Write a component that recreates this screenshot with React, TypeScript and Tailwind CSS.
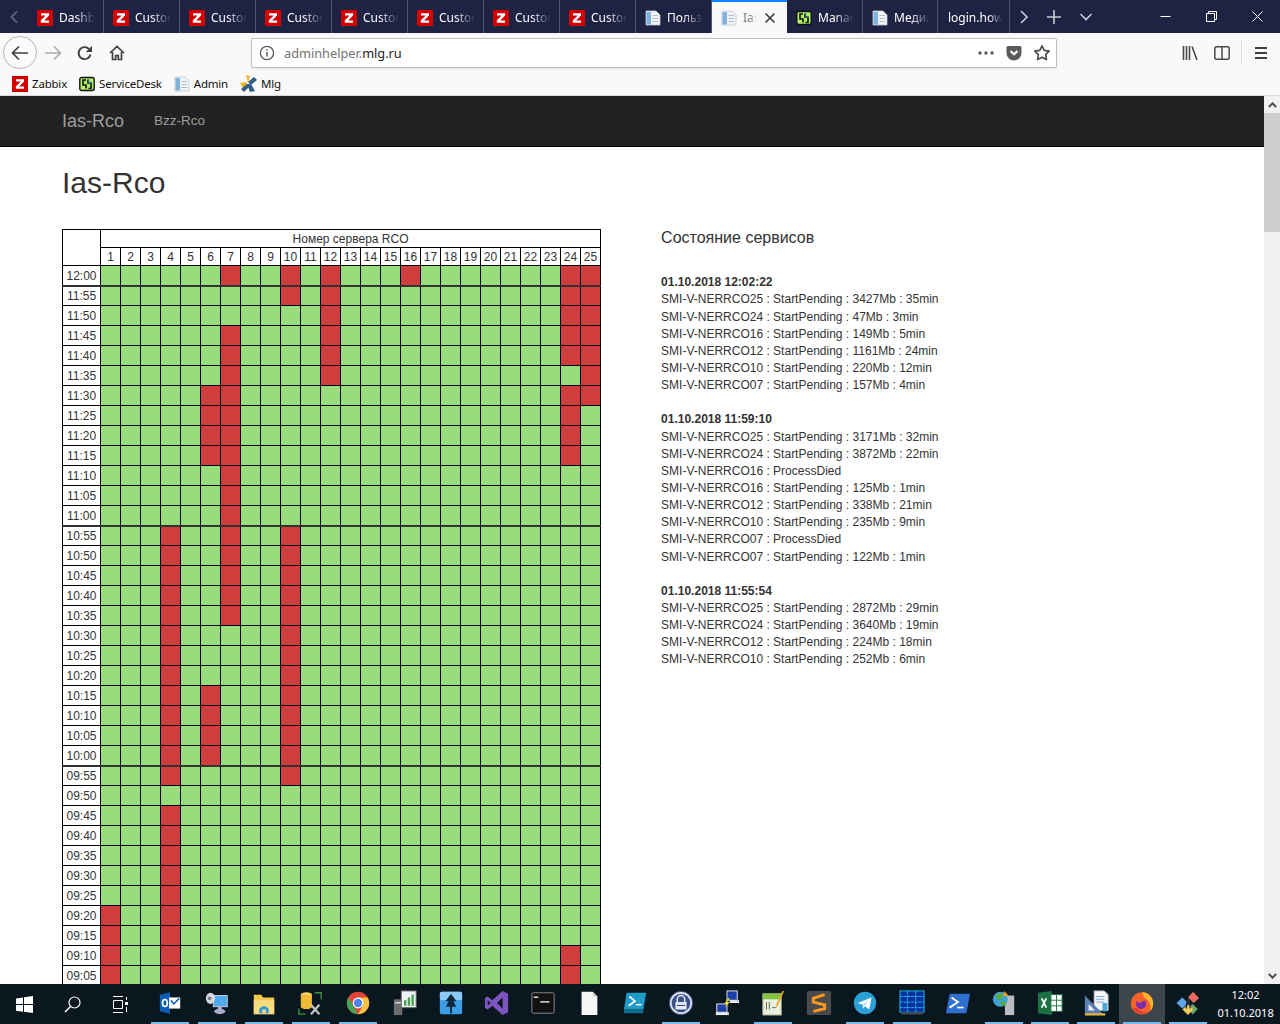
import React from "react";

const UI = "font-['Noto_Sans',sans-serif]";

const reds: Record<string, number[]> = {
  "12:00": [7, 10, 12, 16, 24, 25],
  "11:55": [10, 12, 24, 25],
  "11:50": [12, 24, 25],
  "11:45": [7, 12, 24, 25],
  "11:40": [7, 12, 24, 25],
  "11:35": [7, 12, 25],
  "11:30": [6, 7, 24, 25],
  "11:25": [6, 7, 24],
  "11:20": [6, 7, 24],
  "11:15": [6, 7, 24],
  "11:10": [7],
  "11:05": [7],
  "11:00": [7],
  "10:55": [4, 7, 10],
  "10:50": [4, 7, 10],
  "10:45": [4, 7, 10],
  "10:40": [4, 7, 10],
  "10:35": [4, 7, 10],
  "10:30": [4, 10],
  "10:25": [4, 10],
  "10:20": [4, 10],
  "10:15": [4, 6, 10],
  "10:10": [4, 6, 10],
  "10:05": [4, 6, 10],
  "10:00": [4, 6, 10],
  "09:55": [4, 10],
  "09:50": [],
  "09:45": [4],
  "09:40": [4],
  "09:35": [4],
  "09:30": [4],
  "09:25": [4],
  "09:20": [1, 4],
  "09:15": [1, 4],
  "09:10": [1, 4, 24],
  "09:05": [1, 4, 24],
};

const columns = Array.from({ length: 25 }, (_, i) => i + 1);

const logs = [
  {
    time: "01.10.2018 12:02:22",
    lines: [
      "SMI-V-NERRCO25 : StartPending : 3427Mb : 35min",
      "SMI-V-NERRCO24 : StartPending : 47Mb : 3min",
      "SMI-V-NERRCO16 : StartPending : 149Mb : 5min",
      "SMI-V-NERRCO12 : StartPending : 1161Mb : 24min",
      "SMI-V-NERRCO10 : StartPending : 220Mb : 12min",
      "SMI-V-NERRCO07 : StartPending : 157Mb : 4min",
    ],
  },
  {
    time: "01.10.2018 11:59:10",
    lines: [
      "SMI-V-NERRCO25 : StartPending : 3171Mb : 32min",
      "SMI-V-NERRCO24 : StartPending : 3872Mb : 22min",
      "SMI-V-NERRCO16 : ProcessDied",
      "SMI-V-NERRCO16 : StartPending : 125Mb : 1min",
      "SMI-V-NERRCO12 : StartPending : 338Mb : 21min",
      "SMI-V-NERRCO10 : StartPending : 235Mb : 9min",
      "SMI-V-NERRCO07 : ProcessDied",
      "SMI-V-NERRCO07 : StartPending : 122Mb : 1min",
    ],
  },
  {
    time: "01.10.2018 11:55:54",
    lines: [
      "SMI-V-NERRCO25 : StartPending : 2872Mb : 29min",
      "SMI-V-NERRCO24 : StartPending : 3640Mb : 19min",
      "SMI-V-NERRCO12 : StartPending : 224Mb : 18min",
      "SMI-V-NERRCO10 : StartPending : 252Mb : 6min",
    ],
  },
];

function ZIcon() {
  return (
    <svg width="16" height="16" viewBox="0 0 16 16" className="shrink-0">
      <rect width="16" height="16" fill="#d40000" />
      <path d="M4 3.2h8v2.2L7.2 10.6H12v2.2H3.800v-2.2L8.600 5.400H4z" fill="#fff" />
    </svg>
  );
}

function DocIcon() {
  return (
    <svg width="16" height="16" viewBox="0 0 16 16" className="shrink-0">
      <path d="M1 1h10l4 4v10H1z" fill="#f1f3f6" stroke="#c3c9d0" strokeWidth="0.8" />
      <rect x="1.5" y="2" width="4.5" height="12.5" fill="#7fb2de" />
      <rect x="7.5" y="5" width="5.5" height="1" fill="#b8bec6" />
      <rect x="7.5" y="8" width="5.5" height="1" fill="#b8bec6" />
      <rect x="7.5" y="11" width="5.5" height="1" fill="#b8bec6" />
    </svg>
  );
}

function SdIcon() {
  return (
    <svg width="16" height="16" viewBox="0 0 16 16" className="shrink-0">
      <rect x="0.8" y="1.5" width="14.4" height="13" rx="2" fill="#b2f067" stroke="#111" strokeWidth="1.4" />
      <path d="M7 4H4v5h3v3.5M9.500 12.500H12V7H9V3.500" fill="none" stroke="#111" strokeWidth="1.600" />
      <path d="M10 3v4h3" fill="none" stroke="#3a8fd6" strokeWidth="0.8" />
    </svg>
  );
}

function MlgIcon() {
  return (
    <svg width="17" height="17" viewBox="0 0 17 17" className="shrink-0">
      <path d="M8 8 6 0l4 1z" fill="#f0b429" />
      <path d="M0 8l6-1 2 3-5 3z" fill="#f0b429" />
      <path d="M8 7l6-5 3 3-6 5z" fill="#2f5f84" />
      <path d="M7 9l4 0 4 7-5 1z" fill="#2f5f84" />
      <path d="M1 14l6-5 2 3-5 5z" fill="#2f5f84" />
    </svg>
  );
}

function Tab({
  icon,
  label,
  active,
  width = "w-[76px]",
}: {
  icon?: React.ReactNode;
  label: string;
  active?: boolean;
  width?: string;
}) {
  if (active) {
    return (
      <div className="flex h-[33px] w-[75px] shrink-0 items-center border-t-2 border-[#0a84ff] bg-[#f9f9fa] pl-[9px]">
        {icon}
        <span className="ml-[6px] w-[14px] overflow-hidden whitespace-nowrap text-xs text-[#7a7a7a] [mask-image:linear-gradient(to_right,black_50%,transparent)]">
          {label}
        </span>
        <svg width="12" height="12" viewBox="0 0 12 12" className="ml-[7px]">
          <path d="M1.5 1.5l9 9M10.5 1.5l-9 9" stroke="#333" strokeWidth="1.5" />
        </svg>
      </div>
    );
  }
  return (
    <div className={`flex h-[33px] shrink-0 items-center border-r border-[#50536f] pl-[9px] pt-[2px] ${width}`}>
      {icon}
      <span className="ml-[6px] w-[36px] overflow-hidden whitespace-nowrap text-xs text-white [mask-image:linear-gradient(to_right,black_45%,transparent_100%)]">
        {label}
      </span>
    </div>
  );
}

function TabBar() {
  return (
    <div className={`flex h-[33px] shrink-0 items-center bg-[#1e2243] ${UI}`}>
      <div className="flex w-[28px] justify-center">
        <svg width="10" height="14" viewBox="0 0 10 14">
          <path d="M8 1.500 2.500 7 8 12.500" fill="none" stroke="#5c6079" strokeWidth="2" />
        </svg>
      </div>
      <Tab icon={<ZIcon />} label="Dashboard" />
      {Array.from({ length: 7 }, (_, i) => (
        <Tab key={i} icon={<ZIcon />} label="Custom" />
      ))}
      <Tab icon={<DocIcon />} label="Пользователи" />
      <Tab icon={<DocIcon />} label="Ias-Rco" active />
      <Tab icon={<SdIcon />} label="Manage" />
      <Tab icon={<DocIcon />} label="Медиа" width="w-[75px]" />
      <div className="flex h-[33px] w-[72px] shrink-0 items-center border-r border-[#50536f] pl-[10px] pt-[2px]">
        <span className="w-[54px] overflow-hidden whitespace-nowrap text-xs text-white [mask-image:linear-gradient(to_right,black_75%,transparent)]">
          login.howto
        </span>
      </div>
      <div className="flex w-[28px] justify-center">
        <svg width="10" height="16" viewBox="0 0 10 16">
          <path d="M2 2l6 6-6 6" fill="none" stroke="#c9cbd6" strokeWidth="1.600" />
        </svg>
      </div>
      <div className="flex w-[32px] justify-center">
        <svg width="16" height="16" viewBox="0 0 16 16">
          <path d="M8 1v14M1 8h14" stroke="#c9cbd6" strokeWidth="1.600" />
        </svg>
      </div>
      <div className="flex w-[32px] justify-center">
        <svg width="14" height="10" viewBox="0 0 14 10">
          <path d="M1.500 2 7 7.500 12.500 2" fill="none" stroke="#c9cbd6" strokeWidth="1.600" />
        </svg>
      </div>
      <div className="flex-1" />
      <div className="flex w-[46px] justify-center">
        <svg width="11" height="11" viewBox="0 0 11 11">
          <path d="M0.500 5.500h10" stroke="#fff" />
        </svg>
      </div>
      <div className="flex w-[46px] justify-center">
        <svg width="11" height="11" viewBox="0 0 11 11">
          <path d="M0.500 2.500h8v8h-8zM2.500 2.500v-2h8v8h-2" fill="none" stroke="#fff" />
        </svg>
      </div>
      <div className="flex w-[46px] justify-center">
        <svg width="11" height="11" viewBox="0 0 11 11">
          <path d="M0.500 0.500l10 10M10.500 0.500l-10 10" stroke="#fff" />
        </svg>
      </div>
    </div>
  );
}

function Toolbar() {
  return (
    <div className={`flex h-[37px] shrink-0 items-center bg-[#f9f9fa] pt-[2px] ${UI}`}>
      <div className="ml-[3px] flex h-[33px] w-[34px] items-center justify-center rounded-full border border-[#b5b5b7] bg-[#fbfbfc]">
        <svg width="18" height="16" viewBox="0 0 18 16">
          <path d="M8 1.500 1.500 8 8 14.500M1.500 8H17" fill="none" stroke="#3f3f41" strokeWidth="1.700" />
        </svg>
      </div>
      <div className="flex w-[32px] justify-center">
        <svg width="18" height="16" viewBox="0 0 18 16">
          <path d="M10 1.500 16.500 8 10 14.500M16.500 8H1" fill="none" stroke="#adadaf" strokeWidth="1.700" />
        </svg>
      </div>
      <div className="flex w-[32px] justify-center">
        <svg width="16" height="16" viewBox="0 0 16 16">
          <path d="M13.500 9.500A6 6 0 1 1 12 4" fill="none" stroke="#3f3f41" strokeWidth="1.900" />
          <path d="M15 0.800V7H8.800z" fill="#3f3f41" />
        </svg>
      </div>
      <div className="flex w-[32px] justify-center">
        <svg width="16" height="16" viewBox="0 0 16 16">
          <path d="M1 8 8 1.500 15 8M3.500 7v7.500h3.200v-4h2.600v4h3.200V7" fill="none" stroke="#3f3f41" strokeWidth="1.700" />
        </svg>
      </div>
      <div className="w-[118px]" />
      <div className="flex h-[30px] w-[806px] items-center rounded-[2px] border border-[#bfbfc1] bg-white shadow-[0_1px_2px_rgba(0,0,0,0.08)]">
        <svg width="16" height="16" viewBox="0 0 16 16" className="ml-[7px]">
          <circle cx="8" cy="8" r="6.600" fill="none" stroke="#5a5a5c" strokeWidth="1.300" />
          <path d="M8 7v4.500M8 4.200v1.600" stroke="#5a5a5c" strokeWidth="1.500" />
        </svg>
        <span className="ml-[9px] mt-[2px] text-[12.75px] text-[#737373]">
          adminhelper.<span className="text-[#222]">mlg.ru</span>
        </span>
        <div className="flex-1" />
        <svg width="16" height="4" viewBox="0 0 16 4">
          <circle cx="2" cy="2" r="1.700" fill="#5a5a5c" />
          <circle cx="8" cy="2" r="1.700" fill="#5a5a5c" />
          <circle cx="14" cy="2" r="1.700" fill="#5a5a5c" />
        </svg>
        <svg width="16" height="16" viewBox="0 0 16 16" className="ml-[12px]">
          <path d="M0.500 2.500A1.500 1.500 0 0 1 2 1h12a1.500 1.500 0 0 1 1.500 1.500V8a7.500 7.500 0 0 1-15 0z" fill="#5a5a5c" />
          <path d="M4.500 6 8 9.300 11.500 6" fill="none" stroke="#fff" strokeWidth="2" />
        </svg>
        <svg width="18" height="18" viewBox="0 0 18 18" className="ml-[11px] mr-[5px]">
          <path d="M9 1.800l2.200 4.600 5 .7-3.600 3.500.9 5L9 13.200l-4.500 2.400.9-5L1.800 7.100l5-.7z" fill="none" stroke="#4a4a4c" strokeWidth="1.600" strokeLinejoin="round" />
        </svg>
      </div>
      <div className="w-[117px]" />
      <div className="flex w-[32px] justify-center">
        <svg width="16" height="16" viewBox="0 0 16 16">
          <path d="M1.500 1v14M4.500 1v14M7.500 1v14M10 1.500l5 13.500" stroke="#4a4a4c" strokeWidth="1.600" fill="none" />
        </svg>
      </div>
      <div className="flex w-[32px] justify-center">
        <svg width="16" height="14" viewBox="0 0 16 14">
          <rect x="0.800" y="0.800" width="14.400" height="12.400" rx="2" fill="none" stroke="#4a4a4c" strokeWidth="1.500" />
          <path d="M8 1v12" stroke="#4a4a4c" strokeWidth="1.500" />
        </svg>
      </div>
      <div className="ml-[3px] h-[24px] w-px bg-[#dcdcde]" />
      <div className="flex w-[38px] justify-center">
        <svg width="14" height="14" viewBox="0 0 14 14">
          <path d="M1 2h12M1 7h12M1 12h12" stroke="#3f3f41" strokeWidth="1.800" />
        </svg>
      </div>
    </div>
  );
}

function Bookmark({ icon, label }: { icon: React.ReactNode; label: string }) {
  return (
    <div className="flex items-center gap-[4px]">
      {icon}
      <span className="text-[11.5px] leading-none tracking-[-0.2px] text-[#111]">{label}</span>
    </div>
  );
}

function Bookmarks() {
  return (
    <div className={`flex h-[26px] shrink-0 items-center gap-[12px] border-b border-[#dadadc] bg-[#f9f9fa] pl-[12px] pt-[2px] ${UI}`}>
      <Bookmark icon={<ZIcon />} label="Zabbix" />
      <Bookmark icon={<SdIcon />} label="ServiceDesk" />
      <Bookmark icon={<DocIcon />} label="Admin" />
      <Bookmark icon={<MlgIcon />} label="Mlg" />
    </div>
  );
}

function Navbar() {
  return (
    <div className="flex h-[51px] shrink-0 items-center border-b border-[#080808] bg-[#222] pl-[62px] pt-[1px] text-[#9d9d9d]">
      <span className="text-[18px]">Ias-Rco</span>
      <span className="ml-[30px] text-[13.5px]">Bzz-Rco</span>
    </div>
  );
}

function StatusTable() {
  const cell = "border border-black";
  const thickCell = "border border-black border-b-2 border-b-[#333]";
  return (
    <table className="w-[539px] shrink-0 table-fixed border-collapse bg-white text-center text-[12px] leading-none text-[#333]">
      <colgroup>
        <col className="w-[38px]" />
        {columns.map((c) => (
          <col key={c} className="w-[20px]" />
        ))}
      </colgroup>
      <thead>
        <tr className="h-[18px]">
          <th rowSpan={2} className={cell} />
          <th colSpan={25} className={`${cell} font-normal`}>
            Номер сервера RCO
          </th>
        </tr>
        <tr className="h-[18px]">
          {columns.map((c) => (
            <th key={c} className={`${cell} font-normal`}>
              {c}
            </th>
          ))}
        </tr>
      </thead>
      <tbody>
        {Object.keys(reds).map((time) => {
          const thick = time.endsWith(":00");
          return (
            <tr key={time} className="h-[20px]">
              <td className={thick ? `${thickCell} pt-[2px]` : cell}>{time}</td>
              {columns.map((c) => {
                const bad = reds[time].includes(c);
                return (
                  <td
                    key={c}
                    className={`${thick ? thickCell : cell} ${bad ? "bg-[#d03d3d]" : "bg-[#98dd7c]"}`}
                  />
                );
              })}
            </tr>
          );
        })}
      </tbody>
    </table>
  );
}

function Services() {
  return (
    <div className="ml-[60px] w-[400px] text-[12px] leading-[17.14px] text-[#333]">
      <h4 className="text-[16px] leading-[18px]">Состояние сервисов</h4>
      <div className="mt-[27.3px] flex flex-col gap-[17.14px]">
        {logs.map((log) => (
          <div key={log.time}>
            <div className="font-bold">{log.time}</div>
            {log.lines.map((l, i) => (
              <div key={i}>{l}</div>
            ))}
          </div>
        ))}
      </div>
    </div>
  );
}

function Scrollbar() {
  return (
    <div className="flex w-[16px] shrink-0 flex-col bg-[#f1f1f1]">
      <div className="flex h-[17px] items-center justify-center">
        <svg width="9" height="6" viewBox="0 0 9 6">
          <path d="M0.800 5 4.500 1.300 8.200 5" fill="none" stroke="#505050" strokeWidth="2" />
        </svg>
      </div>
      <div className="h-[119px] bg-[#cdcdcd]" />
      <div className="flex-1" />
      <div className="flex h-[17px] items-center justify-center">
        <svg width="9" height="6" viewBox="0 0 9 6">
          <path d="M0.800 1 4.500 4.700 8.200 1" fill="none" stroke="#505050" strokeWidth="2" />
        </svg>
      </div>
    </div>
  );
}

const P = ({ children }: { children: React.ReactNode }) => (
  <svg width="26" height="26" viewBox="0 0 28 28">
    {children}
  </svg>
);

const taskIcons: { on: boolean; active?: boolean; icon: React.ReactNode }[] = [
  {
    on: true,
    icon: (
      <P>
        <path d="M3 5l11-2.500v23L3 23z" fill="#0a5fb4" />
        <rect x="13" y="8" width="12" height="12" fill="#fff" />
        <path d="M15 11l3 4 6-6" fill="none" stroke="#0a5fb4" strokeWidth="1.600" />
        <ellipse cx="8.500" cy="14" rx="2.600" ry="3.800" fill="none" stroke="#fff" strokeWidth="1.800" />
      </P>
    ),
  },
  {
    on: true,
    icon: (
      <P>
        <rect x="10" y="6" width="15" height="12" fill="#4fa9ec" stroke="#c8d4e4" />
        <ellipse cx="7" cy="9" rx="5" ry="6" fill="#d5d8de" />
        <circle cx="6" cy="9" r="2" fill="#7a7f8a" />
        <ellipse cx="17" cy="23" rx="6" ry="3" fill="#a9a6cf" />
        <path d="M15 18h4v3h-4z" fill="#b4b8c4" />
      </P>
    ),
  },
  {
    on: true,
    icon: (
      <P>
        <path d="M3 5h8l2 3h12v18H3z" fill="#f2c94c" />
        <path d="M3 11h22v15H3z" fill="#f8dc82" />
        <path d="M9 25v-5l5-3 5 3v5z" fill="#2f96d9" />
        <rect x="12" y="21" width="4" height="4" fill="#f8dc82" />
      </P>
    ),
  },
  {
    on: true,
    icon: (
      <P>
        <ellipse cx="9" cy="5" rx="6" ry="2.500" fill="#f6d66e" />
        <path d="M3 5v13c0 1.500 3 2.500 6 2.500s6-1 6-2.500V5z" fill="#eebb35" />
        <path d="M18 3h7v7M1 20v6h7" fill="none" stroke="#3f9142" strokeWidth="1.500" />
        <path d="M14 26l9-10M14 16l9 10" stroke="#c4c4c4" strokeWidth="2.400" />
      </P>
    ),
  },
  {
    on: true,
    icon: (
      <P>
        <circle cx="14" cy="14" r="12" fill="#de4437" />
        <path d="M24.400 8A12 12 0 0 1 14 26l5.500-9.500L14 8z" fill="#f6c445" />
        <path d="M3.600 8 9 17.500 14 26A12 12 0 0 1 3.600 8z" fill="#3fa757" />
        <circle cx="14" cy="14" r="5.800" fill="#fff" />
        <circle cx="14" cy="14" r="4.500" fill="#4a85f0" />
      </P>
    ),
  },
  {
    on: false,
    icon: (
      <P>
        <rect x="2" y="10" width="9" height="17" fill="#6d6d6d" />
        <rect x="3.500" y="13" width="6" height="1.500" fill="#ddd" />
        <rect x="10" y="1" width="16" height="18" fill="#eef1f5" stroke="#666" />
        <rect x="13" y="11" width="2.500" height="6" fill="#46a049" />
        <rect x="17" y="8" width="2.500" height="9" fill="#46a049" />
        <rect x="21" y="5" width="2.500" height="12" fill="#46a049" />
      </P>
    ),
  },
  {
    on: false,
    icon: (
      <P>
        <rect x="2" y="2" width="24" height="24" rx="2" fill="#3d9ee8" />
        <rect x="2" y="2" width="24" height="9" rx="2" fill="#8ccaf5" />
        <path d="M14 4l-6 8h3.500l-3 6H13v7h2v-7h4.500l-3-6H20z" fill="#10263d" />
      </P>
    ),
  },
  {
    on: false,
    icon: (
      <P>
        <path d="M20 1l6 3v20l-6 3-11-10-5 4-3-1.500V8.500L4 7l5 4zM20 8l-6 6 6 6zM4 11v6l3-3z" fill="#7d54c0" fillRule="evenodd" />
      </P>
    ),
  },
  {
    on: false,
    icon: (
      <P>
        <rect x="2" y="3" width="24" height="22" rx="1.500" fill="#101214" stroke="#8d8f91" />
        <rect x="4" y="7" width="5" height="1.600" fill="#ddd" />
        <rect x="11" y="12" width="10" height="1.600" fill="#ddd" />
      </P>
    ),
  },
  {
    on: false,
    icon: (
      <P>
        <path d="M6 2h12l5 5v20H6z" fill="#f6f6f6" />
        <path d="M18 2v5h5z" fill="#cfcfcf" />
      </P>
    ),
  },
  {
    on: false,
    icon: (
      <P>
        <path d="M5 3h21l-3 18H2z" fill="#1d9cc9" />
        <path d="M8 7l6 5-7 5" fill="none" stroke="#fff" strokeWidth="1.800" />
        <rect x="15" y="15" width="6" height="1.600" fill="#fff" />
        <rect x="2" y="21" width="21" height="4" fill="#0f6e90" />
      </P>
    ),
  },
  {
    on: true,
    icon: (
      <P>
        <circle cx="14" cy="14" r="12.500" fill="#dfe3f0" stroke="#3a4f88" />
        <circle cx="14" cy="14" r="10" fill="#3a4f88" />
        <path d="M10 13v-3a4 4 0 0 1 8 0v3" fill="none" stroke="#e8ebf5" strokeWidth="1.600" />
        <rect x="8" y="13" width="12" height="8" fill="#e8ebf5" />
        <rect x="9.500" y="16" width="9" height="1.200" fill="#3a4f88" />
      </P>
    ),
  },
  {
    on: false,
    icon: (
      <P>
        <rect x="14" y="1" width="11" height="10" fill="#1f3fa8" stroke="#e9e9e9" />
        <rect x="3" y="15" width="11" height="9" fill="#1f3fa8" stroke="#e9e9e9" />
        <rect x="2" y="24" width="14" height="3" fill="#e9e9e9" />
        <rect x="17" y="11" width="10" height="3" fill="#e9e9e9" />
        <path d="M15 9l-4 6h3l-3 5 6-7h-3l3-4z" fill="#f7e02e" />
      </P>
    ),
  },
  {
    on: true,
    icon: (
      <P>
        <path d="M3 4h20v23H3z" fill="#e9f0dc" stroke="#9aa38a" />
        <rect x="3" y="4" width="20" height="6" fill="#86c440" />
        <path d="M7 13v8M10 13v8M13 19h4" stroke="#555" />
        <path d="M26 1l-7 16-2 3 .5-4 6.500-15z" fill="#e5a726" />
      </P>
    ),
  },
  {
    on: false,
    icon: (
      <P>
        <rect x="1" y="1" width="26" height="26" rx="2" fill="#4b4b4b" />
        <path d="M20 6 8 10v4l12 3v4L8 24" fill="none" stroke="#ff9a1f" strokeWidth="3.200" transform="translate(0 -1)" />
      </P>
    ),
  },
  {
    on: true,
    icon: (
      <P>
        <circle cx="14" cy="14" r="12" fill="#2ca1d8" />
        <path d="M6 14l15-6-2.500 13-4.500-3.500-2 2.500-.5-4z" fill="#fff" />
        <path d="M11.500 16l6-5-4.500 6.500z" fill="#a9d7ee" />
      </P>
    ),
  },
  {
    on: true,
    icon: (
      <P>
        <rect x="1" y="1" width="26" height="23" fill="#0a2fa0" stroke="#0fc4e8" />
        <path d="M9 1v23M18 1v23M1 7h26M1 13h26M1 19h26" stroke="#19c8f0" strokeDasharray="3 1" />
        <rect x="2" y="24" width="24" height="2.500" fill="#444" />
      </P>
    ),
  },
  {
    on: false,
    icon: (
      <P>
        <path d="M5 4h22l-4 21H1z" fill="#2f6fd1" />
        <path d="M7 8l7 5-9 6" fill="none" stroke="#fff" strokeWidth="2" />
        <rect x="13" y="18" width="7" height="1.800" fill="#fff" />
      </P>
    ),
  },
  {
    on: true,
    icon: (
      <P>
        <rect x="15" y="6" width="10" height="21" fill="#b9bdc2" />
        <circle cx="10" cy="10" r="8" fill="#3da2d8" />
        <path d="M5 6l5-3 3 3-2 4-4 1zM10 13l5-1 1 4-4 2z" fill="#5ea83a" />
        <path d="M14 1l5 5-6 1z" fill="#e9a11e" />
      </P>
    ),
  },
  {
    on: true,
    icon: (
      <P>
        <path d="M1 3l15-2v26L1 25z" fill="#1d7044" />
        <rect x="15" y="5" width="12" height="18" fill="#fff" stroke="#1d7044" />
        <path d="M15 11h12M15 17h12M21 5v18" stroke="#1d7044" />
        <path d="M5 9l5 10M10 9l-5 10" stroke="#fff" strokeWidth="1.900" />
      </P>
    ),
  },
  {
    on: true,
    icon: (
      <P>
        <path d="M12 1h11l4 4v17H12z" fill="#f2f4f7" stroke="#b5bcc7" />
        <path d="M14 7h9M14 10h9M14 13h9" stroke="#7aa7d6" />
        <path d="M2 6v20h20z" fill="#5b7fb5" />
        <path d="M6 15v7h7z" fill="#e8eef7" />
        <rect x="21" y="14" width="5" height="9" fill="#49a7d8" />
        <rect x="2" y="25" width="22" height="2.500" fill="#e3b23c" />
      </P>
    ),
  },
  {
    on: true,
    active: true,
    icon: (
      <P>
        <circle cx="14" cy="14.500" r="12" fill="#f4632a" />
        <path d="M14 2.500c6 0 12 4.500 12 12 0 3-1 5.500-3 8 1-4 0-10-5-13-2-1.200-3-4-4-7z" fill="#ffb32c" />
        <circle cx="13" cy="15" r="5.500" fill="#7a2fb0" />
        <path d="M8 11c3-3 8-3 10 0-2 1-5 1-6 3-2 0-3-1-4-3z" fill="#f4632a" />
        <path d="M4 20c3 5 10 7 16 4-5 .5-9-1-12-5z" fill="#e5362f" />
      </P>
    ),
  },
  {
    on: true,
    icon: (
      <P>
        <path d="M19.500 2l6.500 7-6 5-6-6z" fill="#e86a5f" />
        <path d="M8 8l6 6-6 6-6.500-6z" fill="#5fa7e8" />
        <path d="M14 20l5-5 5.500 5.500-5.500 6z" fill="#6fa968" />
        <path d="M14 27l-6-6 6-6 5.500 6z" fill="#f0cf59" />
        <path d="M14 8l3 7v5h-1.500v-4.500L13 17v3h-1.500v-5z" fill="#23323a" />
      </P>
    ),
  },
];

function Taskbar() {
  return (
    <div className="flex h-[40px] shrink-0 items-stretch bg-[#0a171f] text-white">
      <div className="flex w-[48px] shrink-0 items-center justify-center">
        <svg width="17" height="17" viewBox="0 0 17 17">
          <path d="M0 2.400 7 1.400v6.700H0zM8 1.300 17 0v8.100H8zM0 9h7v6.700l-7-1zM8 9h9v8l-9-1.300z" fill="#fff" />
        </svg>
      </div>
      <div className="flex w-[48px] shrink-0 items-center justify-center">
        <svg width="17" height="17" viewBox="0 0 17 17">
          <circle cx="10.500" cy="6.500" r="5.500" fill="none" stroke="#fff" strokeWidth="1.200" />
          <path d="M6.500 10.500 1 16" stroke="#fff" strokeWidth="1.400" />
        </svg>
      </div>
      <div className="flex w-[48px] shrink-0 items-center justify-center">
        <svg width="17" height="17" viewBox="0 0 17 17">
          <path d="M1 .5h10M1 16.500h10M1.500 4.500h9v8h-9z" fill="none" stroke="#fff" />
          <rect x="13" y="6" width="3" height="3" fill="#fff" />
          <path d="M14.500 1v3M14.500 11v5" stroke="#fff" />
        </svg>
      </div>
      <div className="w-[2.5px] shrink-0" />
      {taskIcons.map((t, i) => (
        <div
          key={i}
          className={`flex shrink-0 flex-col items-center ${i < 5 ? "w-[47px]" : "w-[46.1px]"} ${
            t.active ? "bg-[#3b474d]" : ""
          }`}
        >
          <div className="flex flex-1 items-center justify-center">{t.icon}</div>
          <div className={`h-[2px] w-[38px] ${t.on ? "bg-[#76b9ed]" : ""}`} />
        </div>
      ))}
      <div className="flex min-w-0 flex-1 flex-col items-center justify-center font-['Noto_Sans',sans-serif] text-[11px] leading-[18px]">
        <span>12:02</span>
        <span>01.10.2018</span>
      </div>
    </div>
  );
}

export default function App() {
  return (
    <div className="flex h-[1024px] w-[1280px] flex-col overflow-hidden bg-white font-['Liberation_Sans',Arial,sans-serif]">
      <TabBar />
      <Toolbar />
      <Bookmarks />
      <div className="flex min-h-0 flex-1">
        <div className="flex min-w-0 flex-1 flex-col overflow-hidden">
          <Navbar />
          <h1 className="ml-[62px] mt-[17px] text-[30px] leading-[38px] text-[#333]">Ias-Rco</h1>
          <div className="mt-[27px] flex items-start pl-[62px]">
            <StatusTable />
            <Services />
          </div>
        </div>
        <Scrollbar />
      </div>
      <Taskbar />
    </div>
  );
}
